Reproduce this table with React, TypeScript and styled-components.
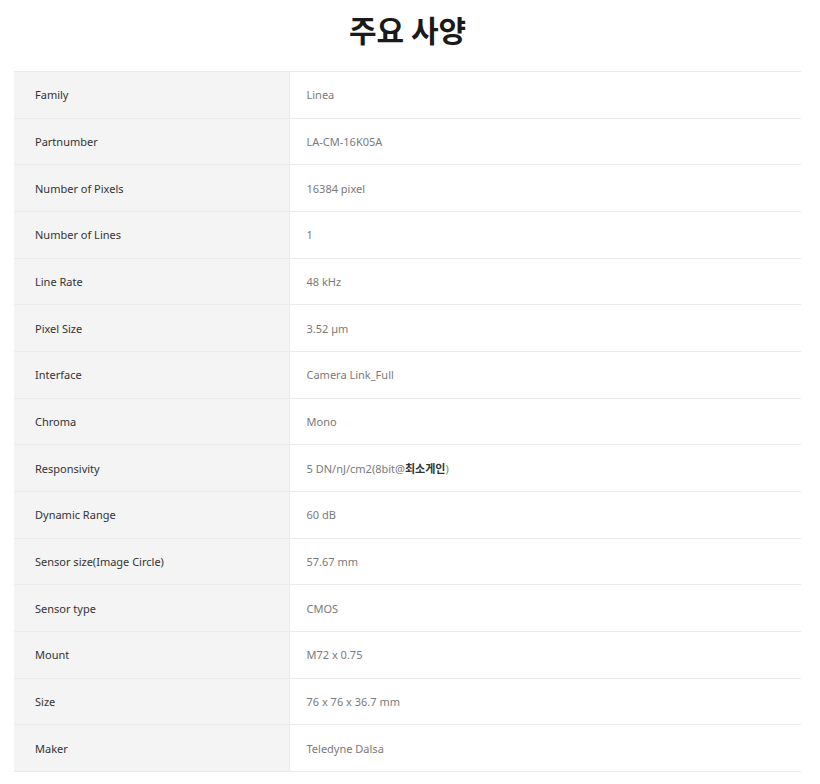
import { ReactElement } from "react";
import styled, { createGlobalStyle } from "styled-components";

const GlobalStyle = createGlobalStyle`
  body {
    margin: 0;
    background: #ffffff;
    font-family: "Noto Sans", "Noto Sans CJK KR", sans-serif;
  }
`;

const Page = styled.main`
  padding: 0 19px 0 14px;
`;

const Title = styled.h2`
  margin: 0;
  height: 71px;
  display: flex;
  align-items: center;
  justify-content: center;
  padding-bottom: 14px;
  box-sizing: border-box;
  font-family: "Noto Sans CJK KR", sans-serif;
  font-size: 30px;
  font-weight: 700;
  color: #1a1a1a;
`;

const SpecTable = styled.table`
  width: 100%;
  border-collapse: collapse;
  border-top: 1px solid #ebebeb;
`;

const Row = styled.tr`
  height: 46.67px;
  border-bottom: 1px solid #ebebeb;
`;

const Label = styled.th`
  width: 275px;
  padding: 0 0 0 21px;
  text-align: left;
  font-weight: 400;
  font-size: 11px;
  color: #333333;
  background: #f4f4f4;
  border-right: 1px solid #ebebeb;
  box-sizing: border-box;
`;

const Value = styled.td`
  padding: 0 0 0 17px;
  font-size: 11px;
  color: #7a7a7a;
`;

const Strong = styled.span`
  color: #333333;
  font-family: "Noto Sans CJK KR", sans-serif;
  font-weight: 700;
`;

type Spec = { label: string; value: ReactElement | string };

const specs: Spec[] = [
  { label: "Family", value: "Linea" },
  { label: "Partnumber", value: "LA-CM-16K05A" },
  { label: "Number of Pixels", value: "16384 pixel" },
  { label: "Number of Lines", value: "1" },
  { label: "Line Rate", value: "48 kHz" },
  { label: "Pixel Size", value: "3.52 µm" },
  { label: "Interface", value: "Camera Link_Full" },
  { label: "Chroma", value: "Mono" },
  {
    label: "Responsivity",
    value: (
      <>
        5 DN/nJ/cm2(8bit@<Strong>최소게인</Strong>)
      </>
    ),
  },
  { label: "Dynamic Range", value: "60 dB" },
  { label: "Sensor size(Image Circle)", value: "57.67 mm" },
  { label: "Sensor type", value: "CMOS" },
  { label: "Mount", value: "M72 x 0.75" },
  { label: "Size", value: "76 x 76 x 36.7 mm" },
  { label: "Maker", value: "Teledyne Dalsa" },
];

export default function App(): ReactElement {
  return (
    <Page>
      <GlobalStyle />
      <Title>주요 사양</Title>
      <SpecTable>
        <tbody>
          {specs.map((spec) => (
            <Row key={spec.label}>
              <Label>{spec.label}</Label>
              <Value>{spec.value}</Value>
            </Row>
          ))}
        </tbody>
      </SpecTable>
    </Page>
  );
}
